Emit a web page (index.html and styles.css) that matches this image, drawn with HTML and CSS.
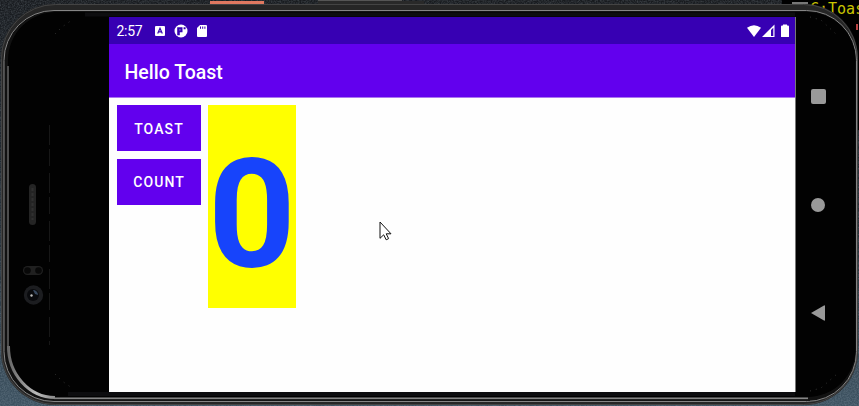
FILE: index.html
```html
<!DOCTYPE html>
<html lang="en">
<head>
<meta charset="utf-8">
<title>Hello Toast</title>
<link rel="stylesheet" href="styles.css">
</head>
<body>
<div class="desktop">
  <svg class="device" viewBox="0 0 859 406" aria-hidden="true">
    <defs>
      <linearGradient id="wall" x1="0" y1="0" x2="0" y2="1"><stop offset="0" stop-color="#181b1f"/><stop offset=".6" stop-color="#26313a"/><stop offset="1" stop-color="#3d5261"/></linearGradient>
      <linearGradient id="shine" x1="0" y1="0" x2="1" y2="0"><stop offset="0" stop-color="#666"/><stop offset=".6" stop-color="#bbb"/><stop offset="1" stop-color="#888"/></linearGradient>
      <filter id="grain" x="0" y="0" width="1" height="1"><feTurbulence type="fractalNoise" baseFrequency=".7" numOctaves="2" seed="4"/><feColorMatrix values="0 0 0 0 .6  0 0 0 0 .7  0 0 0 0 .78  0 .7 0 0 -.22"/></filter>
    </defs>
    <rect width="859" height="406" fill="url(#wall)"/>
    <rect width="859" height="406" filter="url(#grain)" opacity=".5"/>
    <rect x="782" width="77" height="130" fill="#000"/>
    <rect x="792" y="2" width="16" height="2" fill="#777"/>
    <path d="M857 24v6" stroke="#b44" stroke-width="2"/>
    <path d="M210 1h54v4h-54z" fill="#e07860"/>
    <path d="M318 1h106v4H318z" fill="#292929"/><path d="M318 .5h84" stroke="#555"/>
    <text class="editor" x="810" y="14">C:Toas</text>
    <rect x="1" y="4" width="857" height="401" rx="54" fill="#262626"/>
    <rect x="1.500" y="4.500" width="856" height="400" rx="54" fill="none" stroke="#444"/>
    <rect x="4" y="10.500" width="852.500" height="391" rx="50" fill="#111" stroke="#858585"/>
    <rect x="8" y="12" width="847.500" height="385" rx="48" fill="#020202"/>
    <path d="M8 66V350" fill="none" stroke="#4d4d4d" stroke-width="2"/>
    <path d="M8.500 346A47 51 0 0 0 55 397.500" fill="none" stroke="url(#shine)" stroke-width="3"/>
    <path d="M54 398.300H808" stroke="#858585" stroke-width="1.800"/>
    <path d="M54 400.200H810" stroke="#151515" stroke-width="1.400"/>
    <path d="M85 14.500H795M68 394H795" stroke="#0d0d0f" stroke-width="4"/>
    <path d="M49.500 125V345" stroke="#171717" stroke-dasharray="20 4 17 7"/>
    <path d="M55 34L62 27L72 20M55 374L62 381L72 388M810 17L821 20L837 35M810 391L821 388L837 374" fill="none" stroke="#333" stroke-dasharray="1 5"/>
    <rect x="29" y="184" width="7" height="41" rx="3.500" fill="#242424"/>
    <path d="M32.500 188v32" stroke="#303030" stroke-width="2" stroke-dasharray="3 2"/>
    <rect x="23" y="266" width="20" height="9" rx="4.500" fill="#202020"/>
    <circle cx="27.500" cy="270.500" r="3.300" fill="#080808"/><circle cx="38.500" cy="270.500" r="3.300" fill="#080808"/>
    <circle cx="33.500" cy="295" r="9.700" fill="#1c1d20"/><circle cx="33" cy="295" r="6" fill="#090a0d"/>
    <path d="M33 290a5 5 0 0 1 5 5l-3-1z" fill="#394a60"/><circle cx="31.500" cy="295.500" r="1.200" fill="#bbb"/>
  </svg>

  <div class="phone">
    <main class="screen">
      <header class="status">
        <span class="clock">2:57</span>
        <svg class="notices" viewBox="0 0 54 14" aria-hidden="true">
          <rect x="0" y="2" width="10" height="10" rx="1" fill="#fff"/>
          <path d="M2.700 9.500L5 4.300L7.300 9.500M3.600 7.800h2.800" fill="none" stroke="#3700b3" stroke-width="1.200"/>
          <circle cx="26" cy="7" r="6.500" fill="#fff"/>
          <path d="M22.200 3.300h5.300v5h-2.700v3h-2.600zM28.600 3.300h2v2h-2z" fill="#3700b3"/>
          <path d="M24.300 5.300h1.300v1.300h-1.300z" fill="#fff" opacity=".5"/>
          <path d="M45 1h6q1 0 1 1v10q0 1-1 1h-8q-1 0-1-1V4z" fill="#fff"/>
          <path d="M45.500 2.500v2.300M47.700 2.500v2.300M49.900 2.500v2.300" stroke="#3700b3"/>
        </svg>
        <svg class="signals" viewBox="0 0 44 14" aria-hidden="true">
          <path d="M0 3.700Q7 -1.300 14 3.700L7 13Z" fill="#fff"/>
          <path d="M15 13L27.500 .5V13Z" fill="#fff"/><path d="M24 6L26.300 3.700V12H24Z" fill="#3700b3"/>
          <path d="M36 1.500V.5h4v1h1q1 0 1 1v10q0 .5-.5 .5h-7q-.5 0-.5-.5v-10q0-1 1-1z" fill="#fff"/>
        </svg>
      </header>
      <div class="appbar"><h1>Hello Toast</h1></div>
      <section class="content">
        <div class="actions">
          <button type="button">TOAST</button>
          <button type="button">COUNT</button>
        </div>
        <output class="counter">0</output>
      </section>
    </main>
    <nav class="keys">
      <span class="overview"></span>
      <span class="home"></span>
      <svg class="back" viewBox="0 0 14 16"><path d="M0 8L13 .5Q14 0 14 1V15Q14 16 13 15.500Z" fill="#999"/></svg>
    </nav>
  </div>

  <svg class="cursor" viewBox="0 0 13 20" aria-hidden="true"><path d="M1 1V17.300L4.700 13.800L7.200 18.800L9.600 17.600L7.200 12.800H12Z" fill="#fff" stroke="#111"/></svg>
</div>
</body>
</html>
```
FILE: styles.css
```css
* { box-sizing: border-box; }
body { margin: 0; font-family: Roboto, "Liberation Sans", sans-serif; background: #000; overflow: hidden; }
.desktop { position: relative; width: 859px; height: 406px; overflow: hidden; }
.device { position: absolute; inset: 0; width: 859px; height: 406px; }
.editor { font: 15px "DejaVu Sans Mono", monospace; fill: #c8c400; }
.phone { position: relative; display: grid; grid-template-columns: 687px 44px; height: 392px; padding: 17px 0 0 109px; }
.screen { display: flex; flex-direction: column; background: #fefefe; border-right: 1px solid #777; }
.status { display: flex; align-items: center; height: 27px; padding: 0 4px 0 7.500px; background: #3700b3; color: #fff; }
.clock { width: 38.500px; font-size: 14px; line-height: 27px; padding-top: 1px; letter-spacing: -.3px; }
.notices { width: 54px; height: 14px; }
.signals { width: 44px; height: 14px; margin-left: auto; }
.appbar { display: flex; align-items: center; height: 54px; padding: 4px 15.500px 0; background: #6200ee; border-bottom: 1px solid #a976ef; color: #fff; }
h1 { margin: 0; font-size: 19.500px; font-weight: 500; line-height: 24px; }
.content { display: flex; align-items: flex-start; gap: 7.500px; padding: 7px; }
.actions { display: flex; flex-direction: column; gap: 7.500px; padding-left: .500px; }
button { width: 84px; height: 46px; padding: 1px 0 0 1px; border: 0; background: #6200ee; color: #fff; font: 500 14px Roboto, sans-serif; letter-spacing: 1.100px; }
.counter { width: 88px; height: 203px; padding-left: 0; overflow: hidden; background: #ff0; color: #1744fb; font-size: 153px; font-weight: 700; line-height: 219px; text-align: center; white-space: nowrap; }
.keys { display: flex; flex-direction: column; align-items: center; padding-top: 72px; }
.overview { width: 15px; height: 15px; margin-left: 1px; border-radius: 2px; background: #999; }
.home { width: 14px; height: 14px; margin-top: 94px; border-radius: 50%; background: #999; }
.back { width: 14px; height: 16px; margin-top: 93px; }
.cursor { position: absolute; left: 378.500px; top: 221px; width: 13px; height: 20px; }
```
